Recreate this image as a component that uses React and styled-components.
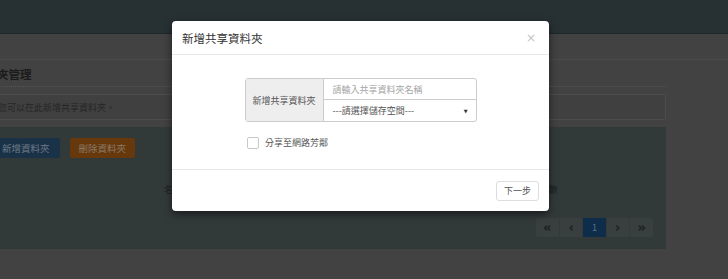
import React from 'react';
import styled, { createGlobalStyle } from 'styled-components';

const GlobalStyle = createGlobalStyle`
  html, body {
    margin: 0;
    padding: 0;
    background: #424242;
    font-family: "Noto Sans CJK TC", "Noto Sans", sans-serif;
    overflow: hidden;
  }
`;

const Page = styled.div`
  position: relative;
  width: 728px;
  height: 279px;
  overflow: hidden;
  background: #424242;
`;

const TopBar = styled.div`
  height: 33px;
  background: #273133;
  border-bottom: 1px solid #1f2829;
`;

const Crumbs = styled.div`
  height: 25px;
  border-bottom: 1px solid #4b4b4b;
`;

const Main = styled.div`
  width: 726px;
  margin-left: -60px;
  display: flex;
  flex-direction: column;
`;

const Heading = styled.h3`
  margin: 0;
  height: 27px;
  padding: 1px 0 0 11px;
  box-sizing: border-box;
  display: flex;
  align-items: center;
  font-size: 11.5px;
  font-weight: 700;
  color: #1b1b1b;
  border-bottom: 1px dotted #555;
`;

const Well = styled.div`
  margin-top: 7px;
  height: 24px;
  padding-left: 57px;
  display: flex;
  align-items: center;
  border: 1px solid #4c4c4c;
  border-radius: 2px;
  background: #404040;
  font-size: 9px;
  color: #262626;
`;

const Board = styled.div`
  margin-top: 7px;
  height: 122px;
  background: #323a39;
  padding: 11px 0 12px;
  box-sizing: border-box;
  display: flex;
  flex-direction: column;
`;

const Toolbar = styled.div`
  display: flex;
  gap: 10px;
`;

const ActionButton = styled.button`
  height: 20px;
  padding: 0 ${p => p.$right}px 0 ${p => p.$left}px;
  border: none;
  border-radius: 2px;
  background: ${p => p.$bg};
  color: ${p => p.$fg};
  font-family: inherit;
  font-size: 9.5px;
  display: flex;
  align-items: center;
`;

const TableHead = styled.div`
  margin-top: 24px;
  display: flex;
  justify-content: space-between;
  padding: 0 108px 0 224px;
  font-size: 9.5px;
  color: #1e2222;
`;

const Pager = styled.div`
  margin-top: auto;
  align-self: flex-end;
  margin-right: 13px;
  display: flex;
  border-radius: 2px;
  overflow: hidden;
`;

const PageCell = styled.div`
  width: 22.6px;
  height: 19px;
  display: flex;
  align-items: center;
  justify-content: center;
  background: ${p => (p.$active ? '#0d2d4a' : '#393f3f')};
  color: ${p => (p.$active ? '#5a7490' : '#1f2424')};
  border-right: 1px solid #343a3a;
  font-size: 9px;
  &:last-child { border-right: none; }
`;

const Modal = styled.div`
  position: absolute;
  left: 172px;
  top: 21px;
  width: 377px;
  height: 190px;
  background: #fff;
  border-radius: 4px;
  box-shadow: 0 3px 8px rgba(0, 0, 0, 0.55);
  display: flex;
  flex-direction: column;
`;

const ModalHeader = styled.div`
  height: 34px;
  box-sizing: border-box;
  padding: 0 10px;
  display: flex;
  align-items: center;
  justify-content: space-between;
  border-bottom: 1px solid #e8e8e8;
`;

const Title = styled.div`
  font-size: 11.5px;
  color: #333;
`;

const Close = styled.span`
  font-size: 12px;
  color: #c4c4c4;
  line-height: 1;
  margin-right: 3px;
  font-family: "DejaVu Sans", sans-serif;
`;

const ModalBody = styled.div`
  flex: 1;
  padding-top: 23px;
  display: flex;
  flex-direction: column;
  align-items: center;
`;

const InputGroup = styled.div`
  display: flex;
  width: 232px;
  border: 1px solid #ccc;
  border-radius: 3px;
  box-sizing: border-box;
`;

const GroupLabel = styled.div`
  width: 77px;
  background: #eee;
  border-right: 1px solid #ccc;
  display: flex;
  align-items: center;
  justify-content: center;
  font-size: 9px;
  color: #555;
`;

const Fields = styled.div`
  flex: 1;
  display: flex;
  flex-direction: column;
`;

const Field = styled.div`
  height: ${p => p.$h}px;
  padding: 0 9px;
  display: flex;
  align-items: center;
  justify-content: space-between;
  font-size: 9px;
  color: ${p => p.$color};
  & + & { border-top: 1px solid #ccc; }
`;

const Arrow = styled.span`
  font-size: 5px;
  color: #333;
  font-family: "DejaVu Sans", sans-serif;
  margin-right: -1px;
`;

const CheckRow = styled.label`
  align-self: flex-start;
  margin: 14px 0 0 75px;
  display: flex;
  align-items: center;
  gap: 6px;
  font-size: 9px;
  color: #555;
`;

const Box = styled.span`
  width: 10px;
  height: 10px;
  border: 1px solid #c8c8c8;
  border-radius: 2px;
  background: #fff;
`;

const ModalFooter = styled.div`
  height: 42px;
  box-sizing: border-box;
  border-top: 1px solid #e8e8e8;
  padding: 0 10px;
  display: flex;
  align-items: center;
  justify-content: flex-end;
`;

const NextButton = styled.button`
  width: 43px;
  height: 20px;
  border: 1px solid #ddd;
  border-radius: 3px;
  background: #fff;
  color: #555;
  font-family: inherit;
  font-size: 9px;
  padding: 0;
`;

const Chevron = ({ double, dir }) => {
  const flip = dir === 'right' ? 'scale(-1,1) translate(-10,0)' : undefined;
  return (
    <svg width="8" height="8" viewBox="0 0 10 10">
      <g transform={flip} fill="none" stroke="currentColor" strokeWidth="2">
        {double ? (
          <>
            <path d="M5 2 L2 5 L5 8" />
            <path d="M9 2 L6 5 L9 8" />
          </>
        ) : (
          <path d="M7 2 L4 5 L7 8" />
        )}
      </g>
    </svg>
  );
};

export default function App() {
  return (
    <Page>
      <GlobalStyle />
      <TopBar />
      <Crumbs />
      <Main>
        <Heading>共享資料夾管理</Heading>
        <Well>您可以在此新增共享資料夾。</Well>
        <Board>
          <Toolbar>
            <ActionButton $bg="#1a3247" $fg="#6c7986" $left={62} $right={10}>新增資料夾</ActionButton>
            <ActionButton $bg="#66380b" $fg="#8a7866" $left={9} $right={9}>刪除資料夾</ActionButton>
          </Toolbar>
          <TableHead>
            <span>名稱</span>
            <span>總數</span>
          </TableHead>
          <Pager>
            <PageCell><Chevron double dir="left" /></PageCell>
            <PageCell><Chevron dir="left" /></PageCell>
            <PageCell $active>1</PageCell>
            <PageCell><Chevron dir="right" /></PageCell>
            <PageCell><Chevron double dir="right" /></PageCell>
          </Pager>
        </Board>
      </Main>

      <Modal>
        <ModalHeader>
          <Title>新增共享資料夾</Title>
          <Close>×</Close>
        </ModalHeader>
        <ModalBody>
          <InputGroup>
            <GroupLabel>新增共享資料夾</GroupLabel>
            <Fields>
              <Field $h={20} $color="#a5a5a5">請輸入共享資料夾名稱</Field>
              <Field $h={21} $color="#555">
                <span>---請選擇儲存空間---</span>
                <Arrow>▼</Arrow>
              </Field>
            </Fields>
          </InputGroup>
          <CheckRow>
            <Box />
            分享至網路芳鄰
          </CheckRow>
        </ModalBody>
        <ModalFooter>
          <NextButton>下一步</NextButton>
        </ModalFooter>
      </Modal>
    </Page>
  );
}
